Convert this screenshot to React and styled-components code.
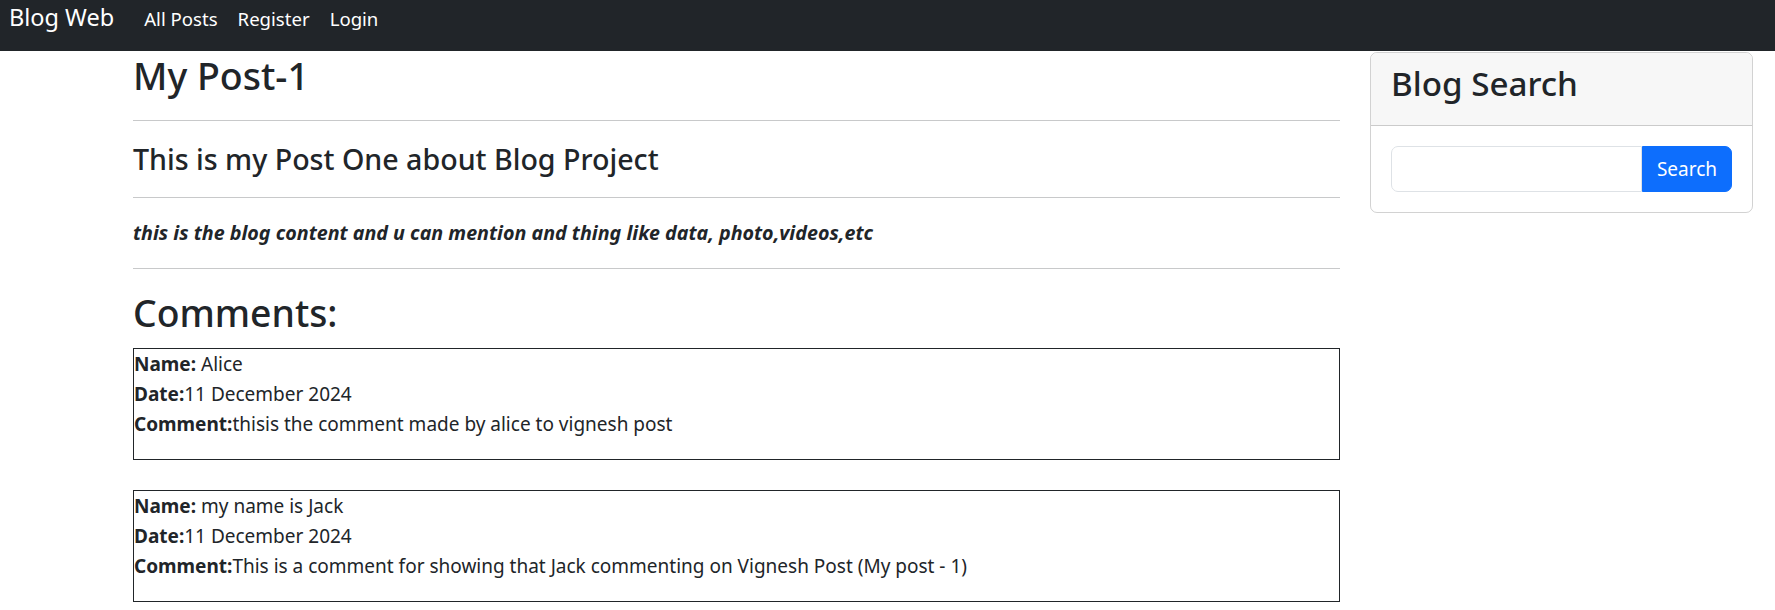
import React from "react";
import styled, { createGlobalStyle } from "styled-components";

const Global = createGlobalStyle`
  html, body { margin: 0; padding: 0; background: #fff; }
  body {
    font-family: "Noto Sans", "Open Sans", sans-serif;
    font-size: 19px;
    line-height: 30px;
    color: #212529;
  }
  * { box-sizing: border-box; }
`;

const Navbar = styled.nav`
  height: 51px;
  background: #212529;
  display: flex;
  align-items: baseline;
  padding: 0 0 0 9px;
`;

const Brand = styled.a`
  font-size: 23.5px;
  line-height: 30px;
  color: #fff;
  text-decoration: none;
  margin-right: 20px;
  padding-top: 2px;
`;

const NavLink = styled.a`
  font-size: 18.6px;
  line-height: 30px;
  color: #fff;
  text-decoration: none;
  padding: 0 10px;
`;

const Page = styled.div`
  display: flex;
  align-items: flex-start;
  gap: 30px;
  padding-left: 133px;
`;

const Main = styled.main`
  width: 1207px;
`;

const Title = styled.h2`
  font-size: 37.5px;
  font-weight: 500;
  line-height: 48px;
  margin: 1px 0 10px;
`;

const Rule = styled.hr`
  margin: 20px 0;
  border: 0;
  border-top: 1px solid #c8c9ca;
`;

const Subtitle = styled.h4`
  font-size: 28.6px;
  font-weight: 500;
  line-height: 36px;
  margin: 0;
`;

const Content = styled.p`
  margin: 0;
  font-size: 19.7px;
  font-weight: 700;
  font-style: italic;
`;

const Heading = styled.h2`
  font-size: 37.3px;
  font-weight: 500;
  line-height: 48px;
  margin: 0 0 11px;
`;

const CommentBox = styled.div`
  border: 1px solid #212529;
  margin-bottom: 30px;
`;

const CommentBody = styled.div`
  margin-bottom: 20px;
`;

const Line = styled.div`
  font-size: 19px;
  line-height: 30px;
`;

const Label = styled.b`
  font-weight: 700;
`;

const Sidebar = styled.aside`
  width: 383px;
  margin-top: 1px;
  border: 1px solid rgba(0, 0, 0, 0.175);
  border-radius: 7px;
  overflow: hidden;
`;

const CardHeader = styled.div`
  background: #f7f7f7;
  border-bottom: 1px solid rgba(0, 0, 0, 0.175);
  padding: 10px 20px;
`;

const CardTitle = styled.h3`
  font-size: 33.2px;
  font-weight: 500;
  line-height: 42px;
  margin: 0 0 10px;
`;

const CardBody = styled.div`
  padding: 20px;
`;

const InputGroup = styled.div`
  display: flex;
`;

const Input = styled.input`
  flex: 1;
  min-width: 0;
  height: 46px;
  border: 1px solid #dee2e6;
  border-radius: 7px 0 0 7px;
  font: inherit;
  padding: 7px 15px;
  outline: none;
`;

const Button = styled.button`
  height: 46px;
  width: 90px;
  background: #0d6efd;
  border: 1px solid #0d6efd;
  color: #fff;
  font-family: inherit;
  font-size: 19px;
  border-radius: 0 7px 7px 0;
  padding: 0;
`;

const comments = [
  { name: "Alice", date: "11 December 2024", text: "thisis the comment made by alice to vignesh post" },
  { name: "my name is Jack", date: "11 December 2024", text: "This is a comment for showing that Jack commenting on Vignesh Post (My post - 1)" },
];

export default function App() {
  return (
    <>
      <Global />
      <Navbar>
        <Brand href="#">Blog Web</Brand>
        <NavLink href="#">All Posts</NavLink>
        <NavLink href="#">Register</NavLink>
        <NavLink href="#">Login</NavLink>
      </Navbar>
      <Page>
        <Main>
          <Title>My Post-1</Title>
          <Rule />
          <Subtitle>This is my Post One about Blog Project</Subtitle>
          <Rule />
          <Content>this is the blog content and u can mention and thing like data, photo,videos,etc</Content>
          <Rule />
          <Heading>Comments:</Heading>
          {comments.map((c, i) => (
            <CommentBox key={i}>
              <CommentBody>
                <Line><Label>Name:</Label> {c.name}</Line>
                <Line><Label>Date:</Label>{c.date}</Line>
                <Line><Label>Comment:</Label>{c.text}</Line>
              </CommentBody>
            </CommentBox>
          ))}
        </Main>
        <Sidebar>
          <CardHeader>
            <CardTitle>Blog Search</CardTitle>
          </CardHeader>
          <CardBody>
            <InputGroup>
              <Input type="text" />
              <Button>Search</Button>
            </InputGroup>
          </CardBody>
        </Sidebar>
      </Page>
    </>
  );
}
